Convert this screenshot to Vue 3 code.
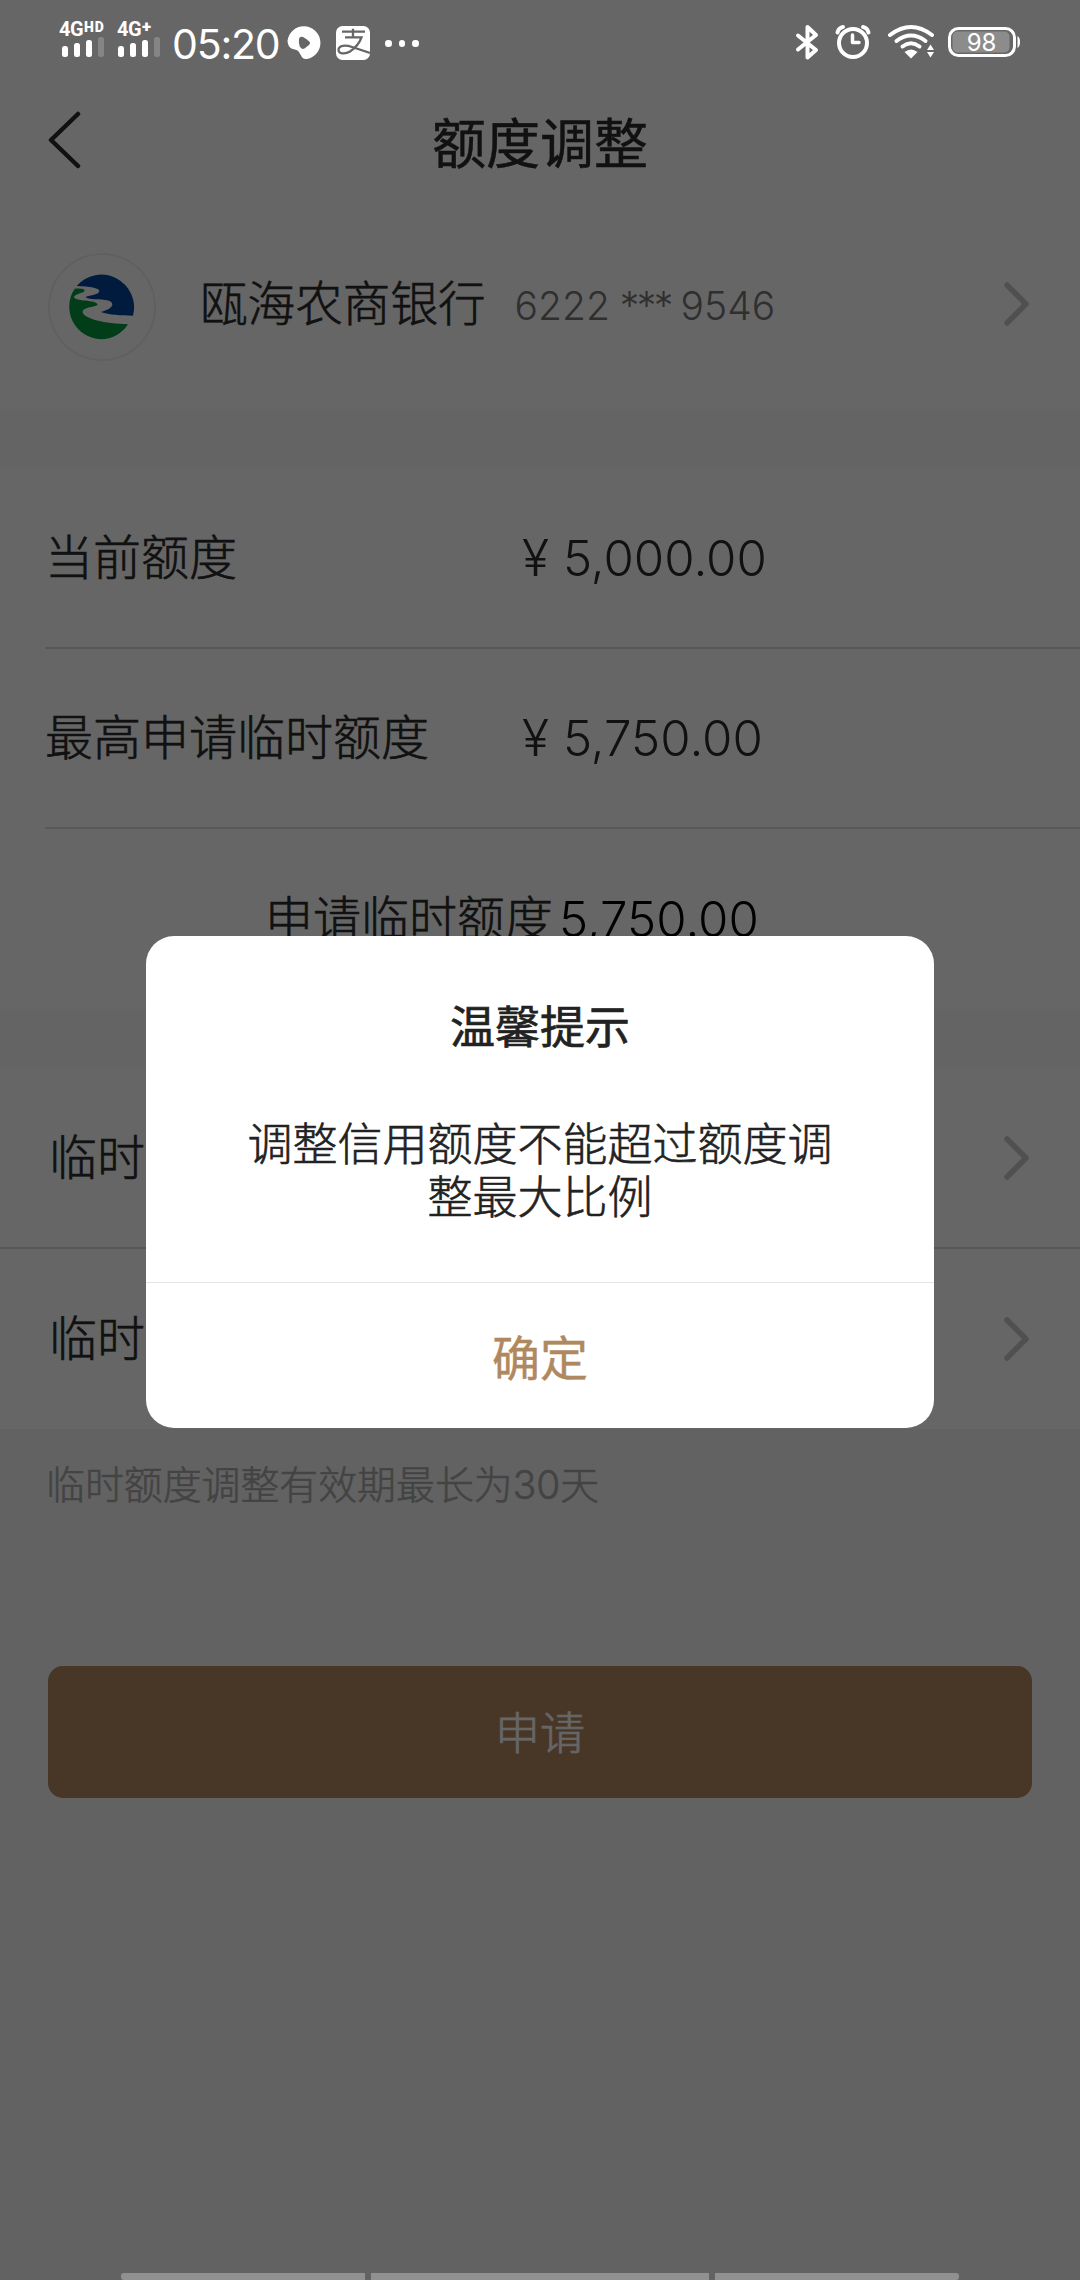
<script setup>
const limits = [
  { label: '当前额度', value: '5,000.00' },
  { label: '最高申请临时额度', value: '5,750.00' },
]
const periods = ['临时额度', '临时额度']
</script>

<template>
  <div class="screen">
    <header class="nav">
      <svg class="back" width="36" height="58" viewBox="0 0 36 58"><path d="M31 3 L4 29 L31 55" /></svg>
      <h1>额度调整</h1>
    </header>

    <section class="card">
      <svg class="logo" width="108" height="108" viewBox="0 0 108 108">
        <circle cx="54" cy="54" r="53" fill="none" stroke="#f0f0f0" stroke-width="2" />
        <g transform="scale(.33333) translate(-24 -24)">
          <path d="M110 123 A98 98 0 0 1 279 212 C240 211 210 210 182 201 C205 195 217 188 217 178 C217 166 195 164 165 163 C150 162 140 160 137 156 C142 151 178 150 178 138 C177 128 150 125 110 123Z" fill="#00449c" />
          <path d="M104 131 C122 129 134 131 134 137 C130 145 102 146 102 157 C106 170 166 164 173 178 C172 188 128 184 128 202 C132 222 195 236 264 238 A98 98 0 0 1 183 283 A98 98 0 0 1 104 131Z" fill="#00983e" />
        </g>
      </svg>
      <span class="bank">瓯海农商银行</span>
      <span class="number">6222 <span class="stars">***</span> 9546</span>
      <svg class="chevron" width="26" height="46" viewBox="0 0 26 46"><path d="M3 4 L22 23 L3 42" /></svg>
    </section>

    <section class="group limits">
      <div v-for="row in limits" :key="row.label" class="row">
        <span class="label">{{ row.label }}</span>
        <span class="yen">¥</span>
        <span class="amount">{{ row.value }}</span>
      </div>
      <div class="row apply-row">
        <span class="label">申请临时额度</span>
        <span class="amount">5,750.00</span>
      </div>
    </section>

    <section class="group periods">
      <div v-for="(p, i) in periods" :key="i" class="row">
        <span class="label">{{ p }}</span>
        <svg class="chevron" width="26" height="46" viewBox="0 0 26 46"><path d="M3 4 L22 23 L3 42" /></svg>
      </div>
    </section>

    <div class="footer">
      <p class="hint">临时额度调整有效期最长为30天</p>
      <button class="submit">申请</button>
    </div>

    <div class="mask">
      <div class="dialog">
        <h2>温馨提示</h2>
        <p>调整信用额度不能超过额度调整最大比例</p>
        <button>确定</button>
      </div>
    </div>

    <div class="status">
      <div class="sim">
        <div class="net">4G<sup>HD</sup></div>
        <div class="bars"><i></i><i></i><i></i><i></i></div>
      </div>
      <div class="sim second">
        <div class="net">4G<sup class="plus">+</sup></div>
        <div class="bars"><i></i><i></i><i></i><i></i></div>
      </div>
      <span class="time">05:20</span>
      <svg class="app" width="34" height="34" viewBox="0 0 34 34">
        <path d="M.5 15 A16.500 16.500 0 1 1 20 33 C16 33.300 15.500 32 14 29.500 C12 26 11.500 24.500 8 23.500 C4 23 1 21 .5 15Z" fill="#fff" />
        <path d="M12 13 Q12.500 10 16 11 Q20 13 22.800 16 Q23.500 17.500 22 19 L17.500 22.500 Q14.500 24 12.800 20.500 Q11.500 17 12 13Z" fill="#666" />
      </svg>
      <svg class="pay" width="34" height="34" viewBox="0 0 34 34">
        <rect width="34" height="34" rx="6.500" fill="#fff" />
        <path d="M6 5.700 H29 M17 2.800 V11.300 M9 11.300 H25.500 C23.500 17 19 22 14 25.500 C9 28.500 2.500 28 2.500 23.700 C3 19 10 19 16 21 L34 27" fill="none" stroke="#666" stroke-width="2.300" />
      </svg>
      <div class="dots"><i></i><i></i><i></i></div>
      <svg class="icons" width="250" height="40" viewBox="790 22 250 40">
        <g fill="none" stroke="#fff" stroke-width="4" stroke-linecap="round" stroke-linejoin="round">
          <path d="M798 35.500 L816 50 L807.500 57.500 V27 L816 35 L798 49.500" />
          <circle cx="853" cy="43" r="14" />
          <path d="M852.500 35 V42.500 H859" stroke-width="3.500" />
          <path d="M837.500 32.500 Q838.500 28 843 27 M868.500 32.500 Q867.500 28 863 27" stroke-width="4" />
          <path d="M890 35 Q911 19 932 35" />
          <path d="M896.500 41 Q911 30 925.500 41" />
          <path d="M902.500 46.500 Q911 40 919.500 46.500" />
        </g>
        <path d="M904.500 52 Q911 47 917.500 52 L911 58.500Z" fill="#fff" />
        <path d="M927 50 L930.500 44.500 L934 50Z M927 52 L930.500 57.500 L934 52Z" fill="#fff" />
        <rect x="949.500" y="28.500" width="65" height="27" rx="9" fill="none" stroke="#fff" stroke-width="3" />
        <rect x="952.500" y="31.500" width="57" height="21" rx="5" fill="#8c8c8c" />
        <path d="M1017.500 36 Q1020 37.500 1020 42 Q1020 46.500 1017.500 48Z" fill="#fff" />
        <text x="981.500" y="51" text-anchor="middle" class="pct">98</text>
      </svg>
    </div>

    <div class="gesture"><i></i><i></i><i></i></div>
  </div>
</template>

<style>
body { margin: 0; }
</style>

<style scoped>
.screen {
  position: relative;
  width: 1080px;
  height: 2280px;
  overflow: hidden;
  background: #fafafa;
  color: #2b2b2b;
  font-family: Inter, "Noto Sans CJK SC", sans-serif;
  font-weight: 300;
  display: flex;
  flex-direction: column;
}
h1, h2, p { margin: 0; }
button { border: 0; padding: 0; font-family: inherit; }
span { white-space: nowrap; }
.label, .bank, .hint, .dialog p, .submit { -webkit-text-stroke: .6px currentColor; }
.nav {
  display: flex;
  align-items: center;
  justify-content: center;
  position: relative;
  height: 110px;
  padding-top: 90px;
  background: #fff;
}
h1 { font-size: 54px; font-weight: 400; line-height: 80px; -webkit-text-stroke: .5px currentColor; }
.back { position: absolute; left: 47px; top: 111px; }
.back path { fill: none; stroke: #2b2b2b; stroke-width: 4.5; stroke-linecap: round; stroke-linejoin: round; }
.card {
  display: flex;
  align-items: center;
  height: 209px;
  padding: 0 50px 0 48px;
  background: #fff;
}
.logo { margin-top: 5px; }
.bank { margin-left: 44px; font-size: 47.6px; line-height: 60px; margin-top: -2px; }
.number { margin-left: 29px; font-size: 39px; color: #777; line-height: 60px; margin-top: 3px; word-spacing: -1px; }
.stars { letter-spacing: -2.6px; }
.chevron { margin-left: auto; }
.card .chevron { margin-top: -1px; }
.chevron path { fill: none; stroke: #c8c8c8; stroke-width: 5.5; stroke-linecap: round; stroke-linejoin: round; }
.group { background: #fff; }
.limits { margin-top: 60px; padding-left: 45px; }
.row { box-sizing: border-box; height: 180px; display: flex; align-items: center; font-size: 48px; line-height: 60px; }
.limits .row { border-bottom: 2px solid #dcdcdc; }
.limits .row .label { width: 477px; }
.limits .row .yen { width: 41px; font-size: 50px; }
.amount { font-size: 49.2px; }
.limits .apply-row { border-bottom: 0; }
.limits .apply-row .label { width: 294px; padding-left: 220px; }
.apply-row .amount { color: #000; }
.periods { margin-top: 60px; }
.periods .row { padding: 0 50px 0 49px; }
.periods .row:first-child { border-bottom: 2px solid #dcdcdc; }
.footer { flex: 1; background: #f6f6f6; display: flex; flex-direction: column; }
.hint { margin: 26px 0 0 46px; font-size: 38.9px; line-height: 60px; color: #a9a9a9; white-space: nowrap; }
.submit {
  margin: 151px 48px 0;
  height: 132px;
  flex: none;
  padding-bottom: 4px;
  border-radius: 15px;
  background: #b38960;
  color: #fff;
  font-size: 45px;
  font-weight: 300;
}
.mask {
  position: absolute;
  inset: 0;
  background: rgba(0, 0, 0, .6);
  display: flex;
  flex-direction: column;
  align-items: center;
}
.dialog {
  width: 788px;
  height: 492px;
  margin-top: 936px;
  border-radius: 28px;
  background: #fff;
  color: #222;
  display: flex;
  flex-direction: column;
  text-align: center;
}
.dialog h2 { font-size: 45px; font-weight: 400; line-height: 60px; margin-top: 62px; -webkit-text-stroke: .7px currentColor; }
.dialog p { font-size: 45px; line-height: 53px; width: 590px; margin: 60px auto 0; font-weight: 300; }
.dialog button {
  margin-top: auto;
  height: 146px;
  padding-bottom: 2px;
  background: none;
  border-top: 1px solid #e5e5e5;
  color: #b08860;
  font-size: 48px;
  font-weight: 400;
  -webkit-text-stroke: .4px currentColor;
}
.status { position: absolute; left: 59px; top: 0; height: 80px; width: 1021px; display: flex; color: #fff; }
.sim { width: 56px; }
.net { font-size: 20px; line-height: 15px; margin-top: 22px; font-weight: 700; font-family: Roboto, sans-serif; white-space: nowrap; height: 15px; display: flex; letter-spacing: -.5px; }
.second .net { margin-left: 2px; margin-right: -2px; }
.net sup { font-size: 14px; line-height: 10px; font-weight: 900; letter-spacing: .8px; margin-left: 1px; }
.net .plus { font-size: 17px; line-height: 8px; }
.bars { display: flex; align-items: flex-end; gap: 6px; height: 20px; margin-left: 3px; }
.bars i { width: 6px; border-radius: 2.5px; background: #fff; height: 11px; }
.bars i:nth-child(2) { height: 14px; }
.bars i:nth-child(3) { height: 17px; }
.bars i:nth-child(4) { height: 20px; background: #858585; }
.time { font-size: 41px; font-weight: 400; line-height: 50px; margin: 19px 0 0 1px; width: 114px; letter-spacing: -1.2px; }
.app { margin: 26px 0 0 1px; }
.pay { margin: 26px 0 0 15px; }
.dots { display: flex; gap: 7px; margin: 40px 0 0 15px; }
.dots i { width: 6.5px; height: 6.5px; border-radius: 50%; background: #fff; }
.icons { position: absolute; left: 731px; top: 22px; }
.pct { font-size: 24px; font-weight: 400; fill: #fff; }
.gesture { position: absolute; left: 121px; top: 2273px; width: 838px; height: 7px; display: flex; gap: 6px; }
.gesture i { width: 244px; background: #909090; border-radius: 3px 0 0 3px; }
.gesture i:nth-child(2) { width: 338px; border-radius: 0; }
.gesture i:nth-child(3) { border-radius: 0 3px 3px 0; }
</style>
